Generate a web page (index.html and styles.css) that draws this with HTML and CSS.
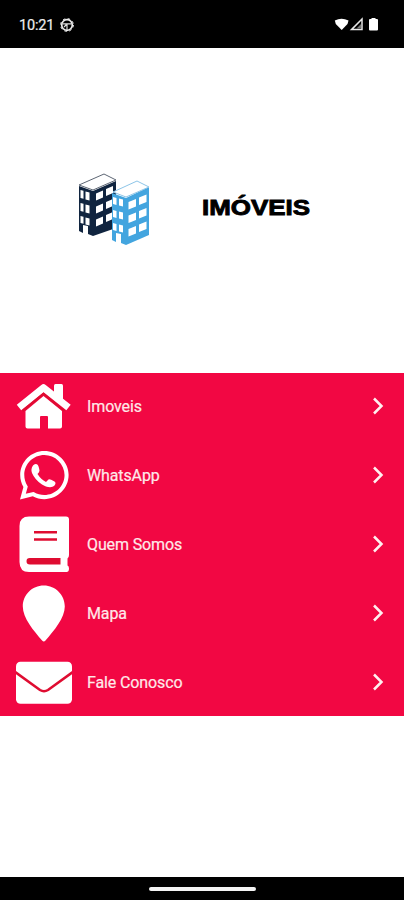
FILE: index.html
```
<!DOCTYPE html>
<html lang="pt-BR">
<head>
<meta charset="utf-8">
<title>Imóveis</title>
<link rel="stylesheet" href="styles.css">
</head>
<body>
<div class="screen">
  <header class="status">
    <span class="time">10:21</span>
    <svg class="gear" viewBox="0 0 14 14"><circle cx="7" cy="7" r="5.3" fill="none" stroke="#eee" stroke-width="1.7"/><circle cx="7" cy="7" r="6.400" fill="none" stroke="#eee" stroke-width="1" stroke-dasharray="2.500 2.526"/><path d="M2.500 5.800h9M7 6V12M7 6L4 9" fill="none" stroke="#ddd" stroke-width="1.200"/></svg>
    <svg class="signals" viewBox="0 0 46 16"><path d="M.8 3.600Q7.500-.2 14.500 3.600L13.500 7 7.700 13 1.800 7Z" fill="#fff"/><path d="M17.500 12.600L28 2v10.600Z" fill="none" stroke="#e8e8e8" stroke-width="1.500"/><path d="M22.500 11.500l4.500-4.500v4.500z" fill="#777"/><path d="M37.500 1h4v1h1.500q1 0 1 1v9.500q0 1-1 1h-7q-1 0-1-1V3q0-1 1-1h1.500z" fill="#fff"/></svg>
  </header>
  <section class="brand">
    <svg class="logo" viewBox="0 0 72 74">
      <path d="M1 13L15 18V63L10 61V53L5 52V60L1 58Z" fill="#10243f"/>
      <path d="M15 18L38 8V55L15 63Z" fill="#10243f"/>
      <path d="M1 12L26 1 38 7 15 17Z" fill="#fff" stroke="#5d6674" stroke-width="1"/>
      <path d="M2.500 17l3 .8v8l-3-.8zm5 1.500l4 1v8l-4-1zM2.500 30l3 .8v8l-3-.8zm5 1.500l4 1v8l-4-1zM2.500 43l3 .8v7l-3-.8zm5 1.500l4 1v7l-4-1zM18 20.500l7-3v7L18 27.500zm10-4.500l7-3v7L28 23zM18 33.500l7-3v7L18 40.500zm10-4.500l7-3v7L28 36zM18 46.500l7-3v7L18 53.500zm10-4.500l7-3v7L28 49z" fill="#fff"/>
      <path d="M34 20L48 25V72L43 70V61L38 60V69L34 67Z" fill="#43a5df"/>
      <path d="M48 25L71 14V62L48 72Z" fill="#43a5df"/>
      <path d="M35 19L59 8 71 14 48 24Z" fill="#fff" stroke="#8dc5e8" stroke-width="1"/>
      <path d="M35 24l3.500 1v7l-3.500-1zm6 1.500l4 1v7l-4-1zM35 37l3.500 1v7l-3.500-1zm6 1.500l4 1v7l-4-1zM35 50l3.500 1v7l-3.500-1zm6 1.500l4 1v7l-4-1zM50.500 29l7.500-3v7.500l-7.500 3zm10.500-4.500l7.500-3V29l-7.500 3zM50.500 42.500l7.500-3V47l-7.500 3zM61 38l7.500-3v7.500l-7.500 3zM50.500 56l7.500-3v7.500l-7.500 3zm10.500-4.500l7.500-3V56l-7.500 3z" fill="#fff"/>
    </svg>
    <svg class="name" viewBox="0 0 110 30"><text x="0" y="22.500" textLength="108" lengthAdjust="spacingAndGlyphs">IMÓVEIS</text></svg>
  </section>
  <nav class="menu">
    <a class="item">
      <svg class="icon" viewBox="0 0 56 60"><path class="w" d="M38 18V9.500q0-1.500 1.500-1.500h6q1.500 0 1.500 1.500v14z"/><path d="M3 31.500L27.500 11.700 52.500 31.500" fill="none" stroke="#fff" stroke-width="7" stroke-linejoin="round" stroke-linecap="butt"/><path class="w" d="M9.500 35L27.500 20 46 35V50.500q0 2-2 2H32V41q0-1-1-1h-6q-1 0-1 1v11.500H11.500q-2 0-2-2z"/><path class="r" d="M6.500 35L27.500 17.800 48.500 35" fill="none" stroke-width="2.200"/></svg>
      <span class="label">Imoveis</span>
      <svg class="chev" viewBox="0 0 12 18"><path d="M2 1.500L9.500 9 2 16.500"/></svg>
    </a>
    <a class="item">
      <svg class="icon" viewBox="0 0 56 60"><path class="w" transform="translate(4 2.500) scale(.1085)" d="M380.900 97.100C339 55.100 283.200 32 223.900 32c-122.400 0-222 99.600-222 222 0 39.100 10.200 77.300 29.600 111L0 480l117.700-30.900c32.400 17.700 68.900 27 106.100 27h.1c122.300 0 224.100-99.600 224.100-222 0-59.300-25.200-115-67.100-157zm-157 341.600c-33.200 0-65.700-8.900-94-25.700l-6.700-4-69.800 18.300L72 359.200l-4.400-7c-18.500-29.400-28.200-63.300-28.200-98.200 0-101.700 82.800-184.500 184.600-184.500 49.300 0 95.600 19.200 130.400 54.100 34.800 34.900 56.200 81.200 56.100 130.500 0 101.800-84.900 184.600-186.600 184.600z"/><path class="w" d="M17 20.500Q18.500 18.300 21 19.200C22.500 20 23 23 23.500 25.500Q23.500 27 21.500 29Q25 34.500 30 37L32.500 34.500Q33.500 33.800 38.500 36.500Q40.500 38 38.500 40.500C35.500 43.500 30 42 26 39.500Q19 35 16 28Q14.500 24 17 20.500Z"/></svg>
      <span class="label">WhatsApp</span>
      <svg class="chev" viewBox="0 0 12 18"><path d="M2 1.500L9.500 9 2 16.500"/></svg>
    </a>
    <a class="item">
      <svg class="icon" viewBox="0 0 56 60"><path class="w" d="M13 2.500H50Q53 2.500 53 5.500V41Q53 43.500 51.500 44.500V51.500Q53 52 53 54.500 53 58 50.500 58H13Q3.500 58 3.500 48V12Q3.500 2.500 13 2.500Z"/><path class="r" d="M18 18.300H41M18 25.500H41" fill="none" stroke-width="2.600"/><path d="M14 44H44.500V50.500H14Q10.500 50.500 10.500 47.200T14 44Z" fill="#df0c31"/></svg>
      <span class="label">Quem Somos</span>
      <svg class="chev" viewBox="0 0 12 18"><path d="M2 1.500L9.500 9 2 16.500"/></svg>
    </a>
    <a class="item">
      <svg class="icon" viewBox="0 0 56 60"><path class="w" d="M27.800 2.500C39.500 2.500 48.800 12 48.800 23.500 48.800 35 38 47.500 29.500 57.500Q27.800 59.500 26.100 57.500C17.500 47.500 6.800 35 6.800 23.500 6.800 12 16 2.500 27.800 2.500Z"/></svg>
      <span class="label">Mapa</span>
      <svg class="chev" viewBox="0 0 12 18"><path d="M2 1.500L9.500 9 2 16.500"/></svg>
    </a>
    <a class="item">
      <svg class="icon" viewBox="0 0 56 60"><rect class="w" x="0" y="9.800" width="56" height="42" rx="4.500"/><path class="r" d="M-1 20L24 38Q28 40.500 32 38L57 20" fill="none" stroke-width="2.600"/></svg>
      <span class="label">Fale Conosco</span>
      <svg class="chev" viewBox="0 0 12 18"><path d="M2 1.500L9.500 9 2 16.500"/></svg>
    </a>
  </nav>
  <footer class="navbar"><div class="handle"></div></footer>
</div>
</body>
</html>
```
FILE: styles.css
```
* { box-sizing: border-box; }
body { margin: 0; background: #fff; font-family: Roboto, sans-serif; }
.screen { display: flex; flex-direction: column; width: 404px; height: 900px; overflow: hidden; background: #fff; }
.status { display: flex; align-items: center; height: 48px; padding: 2px 24px 0 19px; background: #000; color: #eee; flex: none; }
.time { font-size: 14.5px; font-weight: 400; width: 35px; letter-spacing: -0.2px; -webkit-text-stroke: 0.2px #eee; }
.gear { width: 14px; height: 14px; margin-left: 6px; }
.signals { width: 46px; height: 16px; margin-left: auto; }
.brand { display: flex; height: 325px; padding: 125px 0 0 78px; flex: none; }
.logo { width: 72px; height: 74px; }
.name { width: 110px; height: 30px; margin: 19px 0 0 51.500px; overflow: visible; }
.name text { font: 900 22px "Liberation Sans", sans-serif; fill: #000; stroke: #000; stroke-width: 0.9px; }
.menu { flex: none; height: 343px; background: #f20743; overflow: hidden; }
.item { display: flex; align-items: center; height: 69px; margin-top: -1px; margin-bottom: 1px; padding: 0 20px 0 16px; color: #ffe9e9; }
.icon { width: 56px; height: 60px; margin-top: -2px; overflow: hidden; flex: none; }
.w { fill: #fff; }
.r { stroke: #df0c31; }
.label { margin-left: 15px; font-size: 16px; line-height: 20px; letter-spacing: -0.12px; -webkit-text-stroke: 0.2px #ffe9e9; }
.chev { width: 12px; height: 18px; margin-top: -1px; margin-left: auto; }
.chev path { fill: none; stroke: #fff0f0; stroke-width: 2.5px; }
.navbar { display: flex; align-items: center; justify-content: center; height: 23px; margin-top: auto; background: #000; flex: none; }
.handle { width: 107px; height: 4px; border-radius: 2px; background: #f4f4f4; }
```
